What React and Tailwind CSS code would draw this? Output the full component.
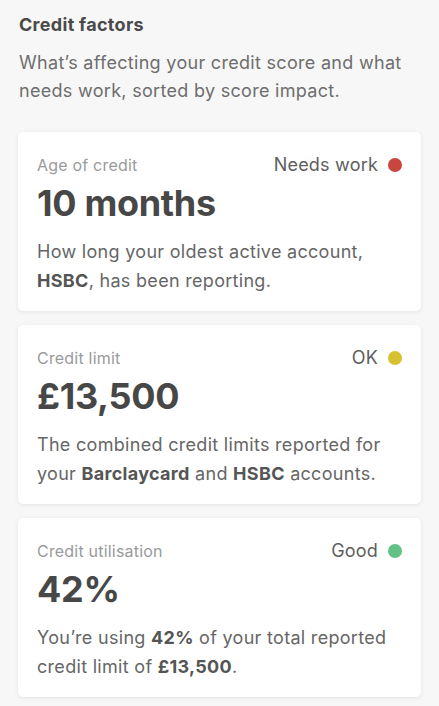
const factors = [
  {
    label: 'Age of credit',
    status: 'Needs work',
    dot: 'bg-[#c8463e]',
    value: '10 months',
    body: (
      <>
        How long your oldest active account, <b className="font-bold text-[#555]">HSBC</b>, has been reporting.
      </>
    ),
  },
  {
    label: 'Credit limit',
    status: 'OK',
    dot: 'bg-[#d8c130]',
    value: '£13,500',
    body: (
      <>
        The combined credit limits reported for your <b className="font-bold text-[#555]">Barclaycard</b> and{' '}
        <b className="font-bold text-[#555]">HSBC</b> accounts.
      </>
    ),
  },
  {
    label: 'Credit utilisation',
    status: 'Good',
    dot: 'bg-[#62c184]',
    value: '42%',
    body: (
      <>
        You’re using <b className="font-bold text-[#555]">42%</b> of your total reported credit limit of{' '}
        <b className="font-bold text-[#555]">£13,500</b>.
      </>
    ),
  },
];

function FactorCard({ label, status, dot, value, body }) {
  return (
    <div className="bg-white rounded-[5px] shadow-[0_1px_4px_rgba(0,0,0,0.08)] h-[179px] pl-[19px] pr-[19px] pt-[23px]">
      <div className="flex items-center justify-between">
        <span className="text-[16px] leading-[20px] tracking-[0.2px] text-[#9a9a9a]">{label}</span>
        <div className="flex items-center gap-[10px]">
          <span className="text-[18px] leading-[20px] tracking-[0.2px] text-[#5e5e5e]">{status}</span>
          <span className={`w-[14px] h-[14px] rounded-full ${dot}`}></span>
        </div>
      </div>
      <div className="mt-[6px] text-[36px] leading-[44px] font-bold text-[#474747] tracking-[-0.3px]">{value}</div>
      <p className="mt-[12px] text-[18px] leading-[29px] tracking-[0.3px] text-[#666]">{body}</p>
    </div>
  );
}

export default function App() {
  return (
    <div className="min-h-[706px] bg-[#f7f7f7] px-[18px] pt-[13px] pb-[10px] font-['Inter',sans-serif]">
      <h2 className="px-px text-[18px] leading-[24px] tracking-[0.3px] font-bold text-[#4a4a4a]">Credit factors</h2>
      <p className="px-px mt-[12px] text-[18px] leading-[28px] tracking-[0.3px] text-[#6e6e6e]">
        What’s affecting your credit score and what needs work, sorted by score impact.
      </p>
      <div className="mt-[27px] flex flex-col gap-[14px]">
        {factors.map((f) => (
          <FactorCard key={f.label} {...f} />
        ))}
      </div>
    </div>
  );
}
